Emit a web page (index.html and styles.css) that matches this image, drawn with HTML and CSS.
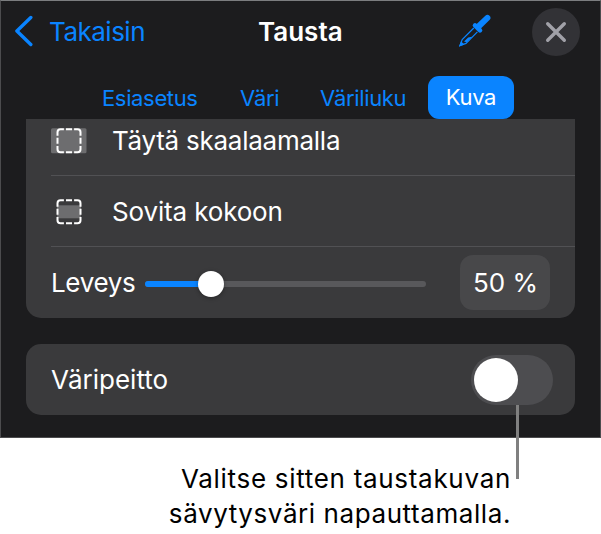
FILE: index.html
```html
<!DOCTYPE html>
<html lang="fi">
<head>
  <meta charset="UTF-8">
  <meta name="viewport" content="width=device-width, initial-scale=1.0">
  <title>Tausta</title>
  <link rel="stylesheet" href="styles.css">
</head>
<body>
  <div class="panel">
    <header class="topbar">
      <button class="back">
        <svg class="chevron" width="20" height="32" viewBox="0 0 20 32"><path d="M15.8 2.5 L1.9 16 L15.8 29.5"/></svg>
        <span>Takaisin</span>
      </button>
      <h1 class="title">Tausta</h1>
      <button class="eyedropper" aria-label="Pipetti">
        <svg width="34" height="34" viewBox="0 0 34 34">
          <path class="bulb" d="M21.5 12.5 L30.4 3.9"/>
          <path class="cap" d="M18 11.4 L23 16.4"/>
          <path class="line" d="M16.8 14 L5.2 25.6 L3 31.6 L9 29.4 L20.4 17.8"/>
          <path class="fill" d="M1.9 32.7 L4 27.2 L7.4 30.6 Z M7 27.6 L11.2 23.4 L15.2 22.8 L9.6 28.2 Z"/>
        </svg>
      </button>
      <button class="close" aria-label="Sulje">
        <svg width="22" height="22" viewBox="0 0 22 22"><path d="M2.7 2.7 L19.3 19.3 M19.3 2.7 L2.7 19.3"/></svg>
      </button>
    </header>

    <nav class="tabs">
      <a class="tab preset">Esiasetus</a>
      <a class="tab color">Väri</a>
      <a class="tab gradient">Väriliuku</a>
      <a class="tab active">Kuva</a>
    </nav>

    <section class="group options">
      <div class="row">
        <svg class="icon" width="36" height="27" viewBox="0 0 36 27">
          <rect class="photo" x="0" y="1.3" width="35.5" height="25" rx="1.5"/>
          <path class="frame" d="M6.5 8.7 V5.3 Q6.5 2.3 9.5 2.3 H12.9 M15 2.3 H21 M23.1 2.3 H26.5 Q29.5 2.3 29.5 5.3 V8.7 M29.5 10.8 V16.8 M29.5 18.9 V22.3 Q29.5 25.3 26.5 25.3 H23.1 M21 25.3 H15 M12.9 25.3 H9.5 Q6.5 25.3 6.5 22.3 V18.9 M6.5 16.8 V10.8"/>
        </svg>
        <span class="label fill-label">Täytä skaalaamalla</span>
      </div>
      <div class="row">
        <svg class="icon" width="36" height="27" viewBox="0 0 36 27">
          <rect class="photo" x="6" y="7.3" width="24" height="13"/>
          <path class="frame" d="M6.5 8.7 V5.3 Q6.5 2.3 9.5 2.3 H12.9 M15 2.3 H21 M23.1 2.3 H26.5 Q29.5 2.3 29.5 5.3 V8.7 M29.5 10.8 V16.8 M29.5 18.9 V22.3 Q29.5 25.3 26.5 25.3 H23.1 M21 25.3 H15 M12.9 25.3 H9.5 Q6.5 25.3 6.5 22.3 V18.9 M6.5 16.8 V10.8"/>
        </svg>
        <span class="label fit-label">Sovita kokoon</span>
      </div>
      <div class="row">
        <span class="label width-label">Leveys</span>
        <div class="slider"><div class="slider-fill"></div><div class="slider-thumb"></div></div>
        <span class="value">50 %</span>
      </div>
    </section>

    <section class="group overlay">
      <span class="label overlay-label">Väripeitto</span>
      <div class="switch">
        <div class="knob"></div>
        <div class="callout-line"></div>
      </div>
    </section>
  </div>

  <p class="caption"><span class="line1">Valitse sitten taustakuvan</span><br><span class="line2">sävytysväri napauttamalla.</span></p>
</body>
</html>
```

FILE: styles.css
```css
:root {
  --blue: #0a84ff;
  --panel: #1c1c1e;
  --group: #3a3a3c;
}

* {
  box-sizing: border-box;
}

body {
  margin: 0;
  background: #fff;
  font-family: Inter, "Liberation Sans", sans-serif;
}

button {
  padding: 0;
  border: none;
  background: none;
  font: inherit;
  color: var(--blue);
}

svg {
  display: block;
  fill: none;
}

.panel {
  height: 438px;
  background: var(--panel);
  border: 1px solid #4c4c4e;
  border-top-color: #7b7d7f;
}

.topbar {
  display: grid;
  grid-template-columns: 243px 129px 1fr 48px;
  align-items: center;
  height: 60px;
  padding: 0 20px 0 14px;
}

.back {
  display: flex;
  align-items: center;
  gap: 14px;
  font-size: 26px;
  letter-spacing: -0.5px;
}

.chevron path {
  stroke: var(--blue);
  stroke-width: 3.4;
  stroke-linecap: round;
  stroke-linejoin: round;
}

.title {
  margin: 0;
  color: #fff;
  font-size: 26px;
  font-weight: 600;
}

.eyedropper {
  justify-self: start;
  margin-left: 70px;
}

.eyedropper .fill {
  fill: var(--blue);
}

.eyedropper .bulb {
  stroke: var(--blue);
  stroke-width: 6;
  stroke-linecap: round;
}

.eyedropper .cap {
  stroke: var(--blue);
  stroke-width: 4.6;
  stroke-linecap: round;
}

.eyedropper .line {
  stroke: var(--blue);
  stroke-width: 1.2;
}

.close {
  display: grid;
  place-items: center;
  width: 48px;
  height: 48px;
  margin-top: 2px;
  border-radius: 50%;
  background: #323236;
}

.close path {
  stroke: #a1a1a8;
  stroke-width: 3.4;
  stroke-linecap: round;
}

.tabs {
  display: flex;
  align-items: center;
  height: 43px;
  margin-top: 15px;
  padding-left: 101px;
  color: var(--blue);
  font-size: 22px;
  letter-spacing: -0.35px;
  white-space: nowrap;
}

.preset {
  width: 138px;
}

.color {
  width: 80px;
}

.gradient {
  width: 108px;
}

.tab.active {
  width: 86px;
  height: 43px;
  border-radius: 11px;
  background: var(--blue);
  color: #fff;
  line-height: 43px;
  text-align: center;
}

.group {
  margin: 0 25px;
  border-radius: 15px;
  background: var(--group);
  color: #fff;
  font-size: 26px;
}

.options {
  border-radius: 0 0 15px 15px;
  padding-left: 25px;
}

.row {
  display: flex;
  align-items: center;
  height: 71px;
  border-bottom: 1px solid #515154;
}

.row:first-child {
  height: 57px;
  padding-bottom: 13px;
}

.row:last-child {
  height: 71px;
  padding-right: 25px;
  border-bottom: none;
}

.icon {
  margin-right: 25px;
}

.photo {
  fill: #6d6d6f;
}

.frame {
  stroke: #fff;
  stroke-width: 2;
}

.label {
  white-space: nowrap;
}

.fill-label {
  letter-spacing: -0.25px;
}

.fit-label {
  letter-spacing: -0.15px;
}

.width-label {
  width: 94px;
  letter-spacing: -0.35px;
}

.slider {
  position: relative;
  width: 281px;
  height: 6px;
  margin-top: 2px;
  border-radius: 3px;
  background: #58585b;
}

.slider-fill {
  width: 66px;
  height: 6px;
  border-radius: 3px;
  background: var(--blue);
}

.slider-thumb {
  position: absolute;
  left: 53px;
  top: -10px;
  width: 26px;
  height: 26px;
  border-radius: 50%;
  background: #fff;
  box-shadow: 0 1px 4px rgba(0, 0, 0, 0.35);
}

.value {
  width: 90px;
  height: 55px;
  margin-left: auto;
  padding-left: 1px;
  border-radius: 13px;
  background: #48484a;
  line-height: 56px;
  text-align: center;
}

.overlay {
  display: flex;
  align-items: center;
  justify-content: space-between;
  height: 71px;
  margin-top: 26px;
  padding: 0 22px 0 25px;
}

.switch {
  position: relative;
  width: 82px;
  height: 50px;
  padding: 3px;
  border-radius: 25px;
  background: #4d4d50;
}

.knob {
  width: 44px;
  height: 44px;
  border-radius: 50%;
  background: #fff;
}

.callout-line {
  position: absolute;
  left: 45px;
  top: 50px;
  width: 3px;
  height: 74px;
  background: #808080;
}

.caption {
  margin: 23px 90px 0 0;
  color: #000;
  font-size: 26px;
  line-height: 35px;
  text-align: right;
}

.line1 {
  letter-spacing: 0.7px;
}

.line2 {
  letter-spacing: 0.58px;
}
```
